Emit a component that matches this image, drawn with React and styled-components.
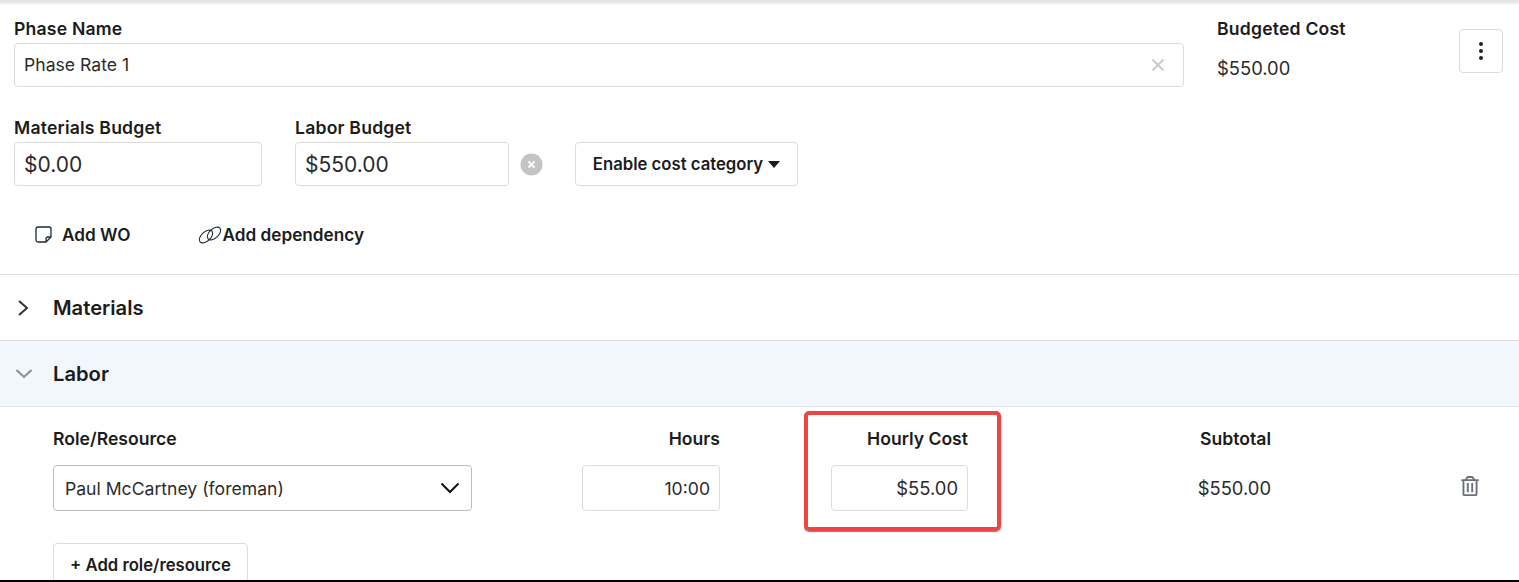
import React from 'react';
import styled, { createGlobalStyle } from 'styled-components';
import { FaRegTrashAlt } from 'react-icons/fa';

const GlobalStyle = createGlobalStyle`
  html, body {
    margin: 0;
    padding: 0;
    background: #fff;
    overflow: hidden;
  }
  body {
    font-family: 'Inter', 'Liberation Sans', sans-serif;
    color: #1f1f1f;
  }
`;

const Page = styled.div`
  width: 1519px;
  height: 582px;
  overflow: hidden;
  box-sizing: border-box;
  border-bottom: 2px solid #000;
  background: #fff;
`;
const TopShadow = styled.div`
  height: 2px;
  background: #e6e6e6;
  box-shadow: 0 1px 3px rgba(0, 0, 0, 0.18);
`;
const Header = styled.div`
  display: flex;
  padding: 18px 16px 0 14px;
  height: 77px;
`;
const NameField = styled.div`
  width: 1170px;
  display: flex;
  flex-direction: column;
`;
const Label = styled.div`
  font-size: 17.6px;
  font-weight: 600;
  line-height: 18px;
  height: 23px;
  letter-spacing: 0.2px;
  color: #1c1c1c;
  white-space: nowrap;
`;
const InputBox = styled.div`
  box-sizing: border-box;
  height: ${(p) => p.$h || 44}px;
  width: ${(p) => p.$w}px;
  flex-shrink: 0;
  border: 1px solid #dcdcdc;
  border-radius: 4px;
  background: #fff;
  display: flex;
  align-items: center;
  justify-content: ${(p) => (p.$right ? 'flex-end' : 'space-between')};
  padding: 0 9px;
  font-size: ${(p) => p.$size || 17.6}px;
  color: #2b2b2b;
`;
const NameInput = styled(InputBox)`
  padding-bottom: 1px;
`;
const ClearX = styled.svg`
  width: 14px;
  height: 14px;
  margin-right: 9px;
  stroke: #c9c9c9;
  stroke-width: 1.8;
  fill: none;
`;
const CostBlock = styled.div`
  margin-left: 33px;
  width: 242px;
  display: flex;
  flex-direction: column;
`;
const CostValue = styled.div`
  margin-top: 13px;
  font-size: 18.4px;
  color: #2b2b2b;
  line-height: 24px;
`;
const Kebab = styled.div`
  box-sizing: border-box;
  width: 44px;
  height: 44px;
  margin-top: 9px;
  border: 1px solid #dcdcdc;
  border-radius: 4px;
  display: flex;
  flex-direction: column;
  align-items: center;
  justify-content: center;
  gap: 3px;
  i {
    width: 4px;
    height: 4px;
    border-radius: 50%;
    background: #222;
  }
`;
const BudgetRow = styled.div`
  display: flex;
  align-items: flex-end;
  padding: 22px 0 0 14px;
`;
const Field = styled.div`
  display: flex;
  flex-direction: column;
  margin-right: ${(p) => p.$mr || 0}px;
`;
const ClearCircle = styled.svg`
  width: 23px;
  height: 23px;
  margin: 0 32px 10px 11px;
`;
const OutlineButton = styled.div`
  box-sizing: border-box;
  height: 44px;
  width: ${(p) => p.$w}px;
  border: 1px solid #dcdcdc;
  border-radius: 4px;
  background: #fff;
  display: flex;
  align-items: center;
  justify-content: center;
  gap: 5px;
  font-size: 16.7px;
  font-weight: 600;
  color: #1c1c1c;
  flex-shrink: 0;
`;
const Caret = styled.span`
  width: 0;
  height: 0;
  border-left: 6.5px solid transparent;
  border-right: 6.5px solid transparent;
  border-top: 7px solid #1c1c1c;
`;
const Actions = styled.div`
  display: flex;
  align-items: center;
  box-sizing: border-box;
  height: 89px;
  padding: 9px 0 0 35px;
  border-bottom: 1px solid #dedee2;
`;
const ActionLink = styled.div`
  display: flex;
  align-items: center;
  gap: ${(p) => p.$gap}px;
  margin-right: ${(p) => p.$mr || 0}px;
  font-size: 17.2px;
  font-weight: 600;
  color: #1c1c1c;
`;
const SectionRow = styled.div`
  box-sizing: border-box;
  height: 66px;
  display: flex;
  align-items: center;
  gap: 21px;
  padding-left: ${(p) => p.$pl}px;
  font-size: 20.2px;
  font-weight: 600;
  color: #1c1c1c;
  background: ${(p) => p.$bg || '#fff'};
  border-bottom: 1px solid ${(p) => p.$line};
`;
const Chevron = styled.svg`
  width: ${(p) => p.$w}px;
  height: 20px;
  fill: none;
  stroke: ${(p) => p.$color};
  stroke-width: 2;
`;
const LaborGrid = styled.div`
  display: grid;
  grid-template-columns: 419px 248px 248px 303px 209px;
  padding: 23px 0 0 53px;
`;
const ColHead = styled.div`
  height: 35px;
  font-size: 17.6px;
  font-weight: 600;
  line-height: 18px;
  color: #1c1c1c;
  text-align: ${(p) => (p.$left ? 'left' : 'right')};
`;
const CostCell = styled.div`
  position: relative;
  display: flex;
  justify-content: flex-end;
  align-items: center;
  height: 46px;
`;
const SelectBox = styled(InputBox)`
  border-color: #bdbdbd;
  padding: 0 11px;
`;
const PlainValue = styled.div`
  height: 46px;
  display: flex;
  align-items: center;
  justify-content: flex-end;
  font-size: 18.4px;
  color: #2b2b2b;
`;
const TrashCell = styled.div`
  height: 42px;
  display: flex;
  align-items: center;
  justify-content: flex-end;
  color: #6b7176;
  font-size: 20px;
`;
const Highlight = styled.div`
  position: absolute;
  left: 84px;
  top: -54px;
  width: 197px;
  height: 120px;
  box-sizing: border-box;
  border: 4px solid #ef4444;
  border-radius: 5px;
  box-shadow: 0 1px 1px rgba(0, 0, 0, 0.5);
  pointer-events: none;
`;
const AddRow = styled.div`
  padding: 32px 0 0 53px;
`;

const App = () => {
  return (
    <Page>
      <GlobalStyle />
      <TopShadow />
      <Header>
        <NameField>
          <Label>Phase Name</Label>
          <NameInput $w={1170}>
            Phase Rate 1
            <ClearX viewBox="0 0 14 14">
              <path d="M1.5 1.5l11 11M12.5 1.5l-11 11" />
            </ClearX>
          </NameInput>
        </NameField>
        <CostBlock>
          <Label>Budgeted Cost</Label>
          <CostValue>$550.00</CostValue>
        </CostBlock>
        <Kebab>
          <i />
          <i />
          <i />
        </Kebab>
      </Header>
      <BudgetRow>
        <Field $mr={33}>
          <Label>Materials Budget</Label>
          <InputBox $w={248} $size={21}>
            $0.00
          </InputBox>
        </Field>
        <Field>
          <Label>Labor Budget</Label>
          <InputBox $w={214} $size={21}>
            $550.00
          </InputBox>
        </Field>
        <ClearCircle viewBox="0 0 23 23">
          <circle cx="11.5" cy="11.5" r="11" fill="#c4c4c4" />
          <path d="M8.5 8.5l6 6M14.5 8.5l-6 6" stroke="#fff" strokeWidth="2" />
        </ClearCircle>
        <OutlineButton $w={223}>
          Enable cost category
          <Caret />
        </OutlineButton>
      </BudgetRow>
      <Actions>
        <ActionLink $gap={10} $mr={67}>
          <svg width="17" height="17" viewBox="0 0 17 17" fill="none" stroke="#1f2a33" strokeWidth="1.3">
            <path d="M3 1h11a2 2 0 0 1 2 2v8l-5 5H3a2 2 0 0 1-2-2V3a2 2 0 0 1 2-2z" />
            <path d="M16 11h-3a2 2 0 0 0-2 2v3" />
          </svg>
          Add WO
        </ActionLink>
        <ActionLink $gap={1}>
          <svg width="24" height="18" viewBox="0 0 24 18" fill="none" stroke="#1f2a33" strokeWidth="1.1">
            <ellipse cx="8" cy="10.5" rx="8" ry="4.6" transform="rotate(-42 8 10.5)" />
            <ellipse cx="16" cy="7.5" rx="8" ry="4.6" transform="rotate(-42 16 7.5)" />
          </svg>
          Add dependency
        </ActionLink>
      </Actions>
      <SectionRow $pl={17} $line="#dedee2">
        <Chevron $w={15} $color="#2d3338" viewBox="0 0 15 20">
          <path d="M2 3l8 7-8 7" />
        </Chevron>
        Materials
      </SectionRow>
      <SectionRow $pl={16} $bg="#f2f6fd" $line="#dfe3ea">
        <Chevron $w={16} $color="#8b8f94" viewBox="0 0 16 20">
          <path d="M0.5 6l7.5 7 7.5-7" />
        </Chevron>
        Labor
      </SectionRow>
      <LaborGrid>
        <ColHead $left>Role/Resource</ColHead>
        <ColHead>Hours</ColHead>
        <ColHead>Hourly Cost</ColHead>
        <ColHead>Subtotal</ColHead>
        <div />
        <SelectBox $w={419} $h={46}>
          Paul McCartney (foreman)
          <svg width="20" height="12" viewBox="0 0 20 12" fill="none" stroke="#111" strokeWidth="2">
            <path d="M1.5 1.5l8.5 8.5 8.5-8.5" />
          </svg>
        </SelectBox>
        <CostCell>
          <InputBox $w={138} $h={46} $right>
            10:00
          </InputBox>
        </CostCell>
        <CostCell>
          <InputBox $w={137} $h={46} $size={18.4} $right>
            $55.00
          </InputBox>
          <Highlight />
        </CostCell>
        <PlainValue>$550.00</PlainValue>
        <TrashCell>
          <FaRegTrashAlt />
        </TrashCell>
      </LaborGrid>
      <AddRow>
        <OutlineButton $w={195}>+ Add role/resource</OutlineButton>
      </AddRow>
    </Page>
  );
};

export default App;
